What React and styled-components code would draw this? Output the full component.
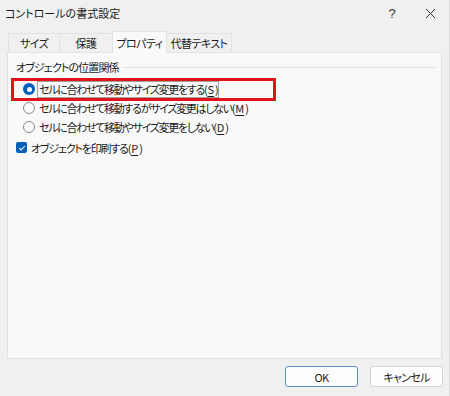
import React from "react";
import styled, { createGlobalStyle, css } from "styled-components";

const GlobalStyle = createGlobalStyle`
  html, body {
    margin: 0;
    padding: 0;
    background: #f0f0f0;
  }
  body {
    font-family: "Noto Sans CJK JP", "Noto Sans", sans-serif;
    font-feature-settings: "palt";
    color: #1b1b1b;
  }
`;

const Window = styled.div`
  width: 450px;
  height: 396px;
  background: #f0f0f0;
  display: flex;
  flex-direction: column;
  box-sizing: border-box;
  border-right: 1px solid #d8d8d8;
  overflow: hidden;
`;

const TitleBar = styled.div`
  height: 26px;
  display: flex;
  align-items: center;
  padding-left: 5px;
  font-size: 11px;
`;

const Title = styled.div`
  flex: 1;
`;

const TitleButton = styled.div`
  width: 38px;
  display: flex;
  justify-content: center;
  color: #333;
  font-family: "Liberation Sans", sans-serif;
  font-size: 13px;
`;

const Tabs = styled.div`
  display: flex;
  align-items: flex-end;
  height: 21px;
  margin-top: 5px;
  padding-left: 8px;
`;

const Tab = styled.div`
  box-sizing: border-box;
  width: ${p => p.w}px;
  height: 19px;
  display: flex;
  align-items: center;
  justify-content: center;
  font-size: 11px;
  letter-spacing: -0.6px;
  white-space: nowrap;
  border: 1px solid #e2e2e2;
  border-bottom: none;
  margin-right: -1px;
  background: #f0f0f0;
  ${p =>
    p.active &&
    css`
      background: #f9f9f9;
      position: relative;
      z-index: 1;
      margin-bottom: -1px;
      height: 22px;
    `}
`;

const Panel = styled.div`
  margin: 0 7px;
  height: 307px;
  box-sizing: border-box;
  background: #f9f9f9;
  border: 1px solid #e3e3e3;
  padding: 6px 6px 0 8px;
`;

const Legend = styled.div`
  display: flex;
  align-items: center;
  gap: 4px;
  font-size: 11px;
  letter-spacing: -0.9px;
  height: 16px;

  &::after {
    content: "";
    flex: 1;
    height: 1px;
    background: #dedede;
  }
`;

const Options = styled.div`
  display: flex;
  flex-direction: column;
  gap: 2px;
  margin-top: 5.5px;
`;

const OptionRow = styled.div`
  display: flex;
  align-items: center;
  gap: 2px;
  height: 17px;
  line-height: 15px;
  font-size: 11px;
  letter-spacing: -1.3px;
  padding-left: 9px;
  margin-left: -2px;
  width: 250px;
  ${p =>
    p.highlight &&
    css`
      outline: 3px solid #e3131b;
      outline-offset: 0;
    `}
`;

const Radio = styled.span`
  width: 12px;
  height: 12px;
  border-radius: 50%;
  box-sizing: border-box;
  flex-shrink: 0;
  display: flex;
  align-items: center;
  justify-content: center;
  ${p =>
    p.checked
      ? css`
          background: #005fb8;
          &::after {
            content: "";
            width: 5px;
            height: 5px;
            border-radius: 50%;
            background: #fff;
          }
        `
      : css`
          border: 1px solid #8b8b8b;
          background: #fbfbfb;
        `}
`;

const Label = styled.span`
  white-space: nowrap;
  padding: 0 1px;
  border: 1px solid ${p => (p.focused ? "#a0a0a0" : "transparent")};
`;

const Key = styled.span`
  text-decoration: underline;
  text-underline-offset: 2px;
  letter-spacing: 0;
  margin: 0 1px;
`;

const CheckRow = styled.div`
  display: flex;
  align-items: center;
  gap: 4px;
  margin-top: 4px;
  font-size: 11px;
  letter-spacing: -1.2px;
  height: 16px;
`;

const CheckBox = styled.span`
  width: 11px;
  height: 11px;
  border-radius: 2px;
  background: #005fb8;
  display: flex;
  align-items: center;
  justify-content: center;
  flex-shrink: 0;
`;

const Footer = styled.div`
  flex: 1;
  display: flex;
  justify-content: flex-end;
  align-items: center;
  gap: 12px;
  padding-right: 6px;
`;

const Button = styled.button`
  width: 73px;
  height: 21px;
  box-sizing: border-box;
  background: #fdfdfd;
  border: 1px solid ${p => (p.primary ? "#5b8fc9" : "#d5d5d5")};
  border-radius: 3px;
  font-family: "Noto Sans CJK JP", "Noto Sans", sans-serif;
  font-feature-settings: "palt";
  font-size: 11px;
  letter-spacing: -0.7px;
  color: #1b1b1b;
  padding: 0;
  margin-top: -2px;
`;

const options = [
  { text: "セルに合わせて移動やサイズ変更をする", key: "S", checked: true },
  { text: "セルに合わせて移動するがサイズ変更はしない", key: "M" },
  { text: "セルに合わせて移動やサイズ変更をしない", key: "D" },
];

const tabs = [
  { label: "サイズ", w: 52 },
  { label: "保護", w: 54 },
  { label: "プロパティ", w: 55, active: true },
  { label: "代替テキスト", w: 66 },
];

const App = () => (
  <>
    <GlobalStyle />
    <Window>
      <TitleBar>
        <Title>コントロールの書式設定</Title>
        <TitleButton>?</TitleButton>
        <TitleButton>
          <svg width="11" height="11" viewBox="0 0 11 11">
            <path d="M1 1L10 10M10 1L1 10" stroke="#333" strokeWidth="1" />
          </svg>
        </TitleButton>
      </TitleBar>
      <Tabs>
        {tabs.map(t => (
          <Tab key={t.label} w={t.w} active={t.active}>
            {t.label}
          </Tab>
        ))}
      </Tabs>
      <Panel>
        <Legend>オブジェクトの位置関係</Legend>
        <Options>
          {options.map(o => (
            <OptionRow key={o.key} highlight={o.checked}>
              <Radio checked={o.checked} />
              <Label focused={o.checked}>
                {o.text}(<Key>{o.key}</Key>)
              </Label>
            </OptionRow>
          ))}
        </Options>
        <CheckRow>
          <CheckBox>
            <svg width="8" height="8" viewBox="0 0 8 8">
              <path
                d="M1.2 4.2L3.1 6L6.8 2"
                fill="none"
                stroke="#fff"
                strokeWidth="1.1"
              />
            </svg>
          </CheckBox>
          <span>
            オブジェクトを印刷する(<Key>P</Key>)
          </span>
        </CheckRow>
      </Panel>
      <Footer>
        <Button primary>OK</Button>
        <Button>キャンセル</Button>
      </Footer>
    </Window>
  </>
);

export default App;
